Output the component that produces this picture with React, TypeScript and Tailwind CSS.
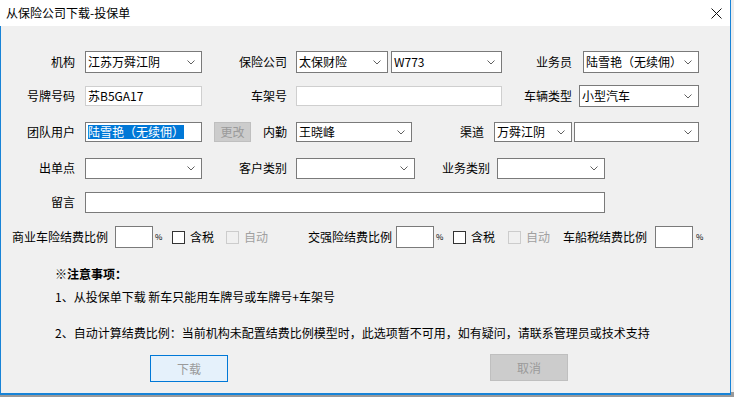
import React from "react";

function Chevron() {
  return (
    <svg width="8" height="5" viewBox="0 0 8 5" className="shrink-0">
      <polyline points="0.5,0.5 4,4 7.5,0.5" fill="none" stroke="#606060" strokeWidth="1" />
    </svg>
  );
}

function Select({ className, value }: { className: string; value?: string }) {
  return (
    <div
      className={`flex items-center justify-between border border-[#7a7a7a] bg-white pl-[2px] pr-[6px] ${className}`}
    >
      <span className="text-[12px] leading-[14px] whitespace-nowrap">{value}</span>
      <Chevron />
    </div>
  );
}

function Label({ className, text }: { className: string; text: string }) {
  return <div className={`text-right text-[12px] leading-[14px] whitespace-nowrap ${className}`}>{text}</div>;
}

function Box({ disabled }: { disabled?: boolean }) {
  return (
    <div
      className={`w-[13px] h-[13px] border ${disabled ? "border-[#cccccc]" : "border-[#333333] bg-white"}`}
    />
  );
}

export default function App() {
  return (
    <div className="w-[734px] h-[397px] bg-[#9a9a9a] flex font-['Noto_Sans_CJK_SC',sans-serif] text-black">
      <div className="w-[731px] h-[395px] flex flex-col border-r border-b-2 border-[#1883d7] bg-[#f0f0f0]">
        {/* Title bar */}
        <div className="h-[26px] bg-white flex items-center justify-between pl-[6px] pr-[8px] shrink-0">
          <span className="text-[12px] leading-[14px]">从保险公司下载-投保单</span>
          <svg width="11" height="11" viewBox="0 0 11 11">
            <path d="M0.5 0.5 L10.5 10.5 M10.5 0.5 L0.5 10.5" stroke="#111" strokeWidth="1" />
          </svg>
        </div>

        <div className="flex-1 flex flex-col border-l border-[#1883d7]">
          {/* Row 1 */}
          <div className="mt-[25px] h-[22px] flex items-center">
            <Label className="w-[74px]" text="机构" />
            <Select className="ml-[10px] w-[117px] h-[22px]" value="江苏万舜江阴" />
            <Label className="w-[85px]" text="保险公司" />
            <Select className="ml-[9px] w-[92px] h-[22px]" value="太保财险" />
            <Select className="ml-[3px] w-[111px] h-[22px]" value="W773" />
            <Label className="w-[70px]" text="业务员" />
            <Select className="ml-[11px] w-[116px] h-[22px]" value="陆雪艳（无续佣）" />
          </div>

          {/* Row 2 */}
          <div className="mt-[12px] h-[22px] flex items-center">
            <Label className="w-[74px]" text="号牌号码" />
            <div className="ml-[10px] w-[117px] h-[20px] border border-[#cfcfcf] bg-white flex items-center pl-[2px] text-[12px] leading-[14px]">
              苏B5GA17
            </div>
            <Label className="w-[85px]" text="车架号" />
            <div className="ml-[9px] w-[206px] h-[20px] border border-[#cfcfcf] bg-white" />
            <Label className="w-[70px]" text="车辆类型" />
            <Select className="ml-[7px] w-[120px] h-[22px]" value="小型汽车" />
          </div>

          {/* Row 3 */}
          <div className="mt-[14px] h-[22px] flex items-center">
            <Label className="w-[74px]" text="团队用户" />
            <div className="ml-[10px] w-[117px] h-[20px] border border-[#7a7a7a] bg-white flex items-center pl-[2px]">
              <span className="bg-[#0078d7] text-white text-[12px] leading-[14px] whitespace-nowrap">陆雪艳（无续佣）</span>
            </div>
            <div className="ml-[12px] w-[37px] h-[20px] border border-[#bfbfbf] bg-[#cccccc] flex items-center justify-center text-[12px] leading-[14px] text-[#9a9a9a]">
              更改
            </div>
            <Label className="w-[36px]" text="内勤" />
            <Select className="ml-[9px] w-[116px] h-[20px]" value="王晓峰" />
            <Label className="w-[72px]" text="渠道" />
            <Select className="ml-[10px] w-[78px] h-[20px]" value="万舜江阴" />
            <Select className="ml-[2px] w-[125px] h-[20px]" />
          </div>

          {/* Row 4 */}
          <div className="mt-[14px] h-[22px] flex items-center">
            <Label className="w-[74px]" text="出单点" />
            <Select className="ml-[10px] w-[117px] h-[21px]" />
            <Label className="w-[85px]" text="客户类别" />
            <Select className="ml-[9px] w-[119px] h-[21px]" />
            <Label className="w-[75px]" text="业务类别" />
            <Select className="ml-[7px] w-[108px] h-[21px]" />
          </div>

          {/* Row 5 */}
          <div className="mt-[12px] h-[22px] flex items-center">
            <Label className="w-[74px]" text="留言" />
            <div className="ml-[10px] w-[520px] h-[21px] border border-[#7a7a7a] bg-white" />
          </div>

          {/* Row 6 */}
          <div className="mt-[13px] h-[22px] flex items-center text-[12px] leading-[14px]">
            <Label className="w-[107px]" text="商业车险结费比例" />
            <div className="ml-[7px] w-[38px] h-[22px] border border-[#7a7a7a] bg-white" />
            <span className="ml-[2px] w-[8px] text-[8px]">%</span>
            <div className="ml-[9px]"><Box /></div>
            <span className="ml-[5px] w-[24px]">含税</span>
            <div className="ml-[12px]"><Box disabled /></div>
            <span className="ml-[5px] w-[24px] text-[#a0a0a0]">自动</span>
            <Label className="w-[124px]" text="交强险结费比例" />
            <div className="ml-[4px] w-[38px] h-[22px] border border-[#7a7a7a] bg-white" />
            <span className="ml-[2px] w-[8px] text-[8px]">%</span>
            <div className="ml-[9px]"><Box /></div>
            <span className="ml-[5px] w-[24px]">含税</span>
            <div className="ml-[13px]"><Box disabled /></div>
            <span className="ml-[5px] w-[24px] text-[#a0a0a0]">自动</span>
            <Label className="w-[97px]" text="车船税结费比例" />
            <div className="ml-[8px] w-[38px] h-[22px] border border-[#7a7a7a] bg-white" />
            <span className="ml-[3px] w-[8px] text-[8px]">%</span>
          </div>

          {/* Notes */}
          <div className="pl-[54px] text-[12px] leading-[16px]">
            <div className="mt-[18px] font-bold">※注意事项：</div>
            <div className="mt-[7px]">1、从投保单下载 新车只能用车牌号或车牌号+车架号</div>
            <div className="mt-[20px]">2、自动计算结费比例：当前机构未配置结费比例模型时，此选项暂不可用，如有疑问，请联系管理员或技术支持</div>
          </div>

          {/* Buttons */}
          <div className="mt-[14px] flex items-start">
            <div className="ml-[149px] w-[78px] h-[27px] border border-[#0078d7] bg-[#e5f1fb] flex items-center justify-center text-[12px] leading-[14px] text-[#9a9a9a]">
              下载
            </div>
            <div className="ml-[262px] -mt-[1px] w-[78px] h-[27px] border border-[#bfbfbf] bg-[#cccccc] flex items-center justify-center text-[12px] leading-[14px] text-[#9a9a9a]">
              取消
            </div>
          </div>
        </div>
      </div>
      <div className="w-[3px] h-[392px] bg-[#ececec]" />
    </div>
  );
}
